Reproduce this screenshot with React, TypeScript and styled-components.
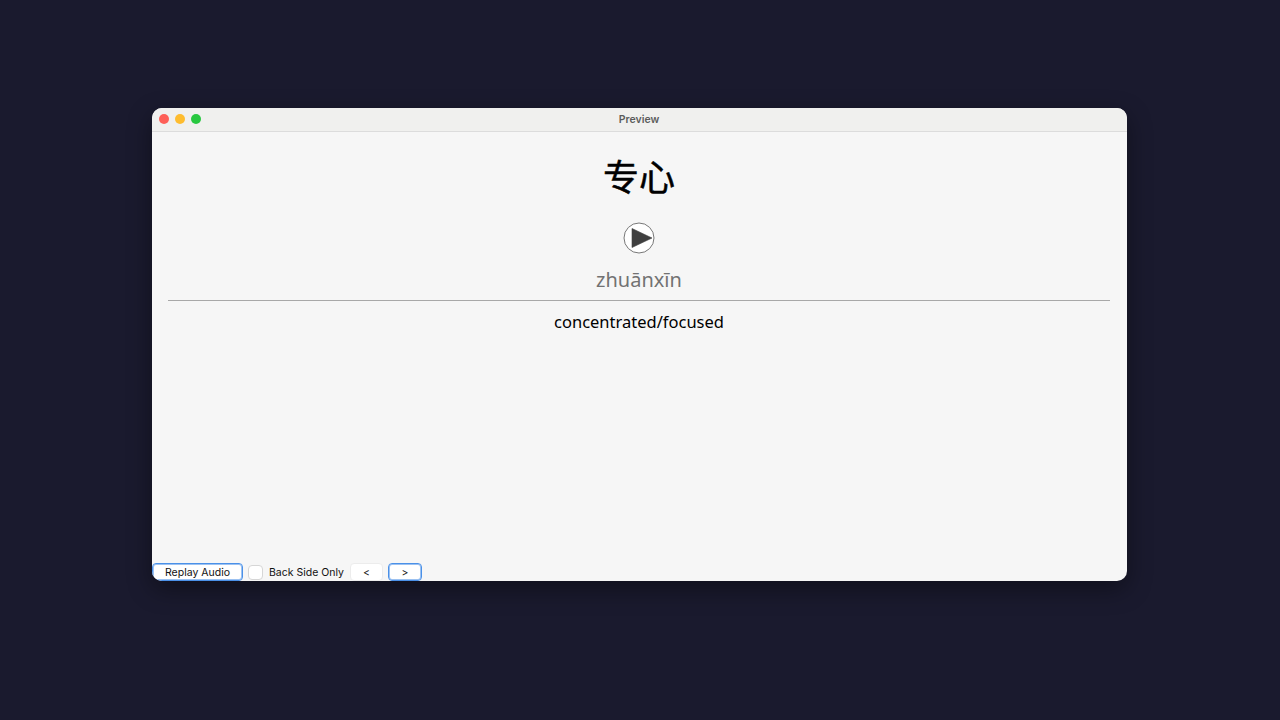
import React from 'react'
import styled, { createGlobalStyle } from 'styled-components'

const GlobalStyle = createGlobalStyle`
  html, body {
    margin: 0;
    background: #1a1a2e;
  }
`

const Page = styled.div`
  box-sizing: border-box;
  width: 1280px;
  height: 720px;
  padding: 108px 0 0 152px;
  overflow: hidden;
  background: #1a1a2e;
`

const Window = styled.div`
  display: flex;
  flex-direction: column;
  width: 975px;
  height: 473px;
  border-radius: 10px;
  overflow: hidden;
  background: #f6f6f6;
  box-shadow: 0 8px 24px rgba(0, 0, 0, 0.4);
`

const TitleBar = styled.div`
  position: relative;
  flex: none;
  display: flex;
  align-items: center;
  justify-content: center;
  height: 23px;
  padding-right: 1px;
  background: #f0f0ee;
  border-bottom: 1px solid #dcdcdc;
`

const Lights = styled.div`
  position: absolute;
  left: 7px;
  top: 6px;
  display: flex;
  gap: 6px;
`

const Light = styled.span<{ $color: string }>`
  width: 10px;
  height: 10px;
  border-radius: 50%;
  background: ${p => p.$color};
`

const Title = styled.div`
  margin-top: -1px;
  font: 600 10.5px Inter, "Liberation Sans", sans-serif;
  color: #5c5c5c;
`

const Card = styled.div`
  flex: 1;
  display: flex;
  flex-direction: column;
  align-items: center;
  padding: 0 17px 0 16px;
`

const Hanzi = styled.div`
  margin-top: 20px;
  height: 46px;
  font: 400 36px/46px "Noto Sans CJK SC", sans-serif;
  -webkit-text-stroke: 0.5px #000;
  color: #000;
`

const PlayButton = styled.button`
  display: block;
  margin-top: 24px;
  padding: 0;
  width: 32px;
  height: 32px;
  border: 0;
  background: none;
  svg {
    display: block;
  }
`

const Pinyin = styled.div`
  margin-top: 12px;
  height: 28px;
  font: 400 20px/28px "Noto Sans", sans-serif;
  color: #727272;
`

const Rule = styled.hr`
  align-self: stretch;
  margin: 6px 0 0;
  border: 0;
  border-top: 1px solid #a8a8a8;
`

const Meaning = styled.div`
  margin-top: 9px;
  font: 400 16.5px/24px "Noto Sans", sans-serif;
  color: #000;
`

const Controls = styled.div`
  flex: none;
  display: flex;
  align-items: center;
  height: 18px;
  font: 400 10.5px Inter, "Liberation Sans", sans-serif;
  color: #111;
`

const Button = styled.button<{ $focused?: boolean; $width: number }>`
  box-sizing: border-box;
  width: ${p => p.$width}px;
  height: 18px;
  padding: 0;
  border-radius: 4px;
  background: #fff;
  border: ${p => (p.$focused ? '1px solid #4a90e8' : '1px solid #ececec')};
  box-shadow: ${p => (p.$focused ? 'inset 0 0 0 1px rgba(74, 144, 232, 0.55)' : 'none')};
  font: 400 10.5px Inter, "Liberation Sans", sans-serif;
  color: #111;
`

const Check = styled.span`
  box-sizing: border-box;
  width: 15px;
  height: 15px;
  margin: 0 6px 0 5px;
  border: 1px solid #d6d6d6;
  border-radius: 4px;
  background: #fff;
`

const Label = styled.span`
  margin-right: 6px;
`

const NextButton = styled(Button)`
  margin-left: 5px;
`

export default function App() {
  return (
    <Page>
      <GlobalStyle />
      <Window>
        <TitleBar>
          <Lights>
            <Light $color="#fe5f57" />
            <Light $color="#febc2e" />
            <Light $color="#28c840" />
          </Lights>
          <Title>Preview</Title>
        </TitleBar>
        <Card>
          <Hanzi>专心</Hanzi>
          <PlayButton aria-label="Play">
            <svg width="32" height="32" viewBox="0 0 32 32">
              <circle cx="16" cy="16" r="15" fill="#fff" stroke="#777" strokeWidth="1" />
              <path d="M9 6.5 L29 16 L9 25.5 Z" fill="#3f3f3f" stroke="#3f3f3f" strokeWidth="0.6" strokeLinejoin="round" />
            </svg>
          </PlayButton>
          <Pinyin>zhuānxīn</Pinyin>
          <Rule />
          <Meaning>concentrated/focused</Meaning>
        </Card>
        <Controls>
          <Button $focused $width={91}>Replay Audio</Button>
          <Check />
          <Label>Back Side Only</Label>
          <Button $width={33}>&lt;</Button>
          <NextButton $focused $width={34}>&gt;</NextButton>
        </Controls>
      </Window>
    </Page>
  )
}
